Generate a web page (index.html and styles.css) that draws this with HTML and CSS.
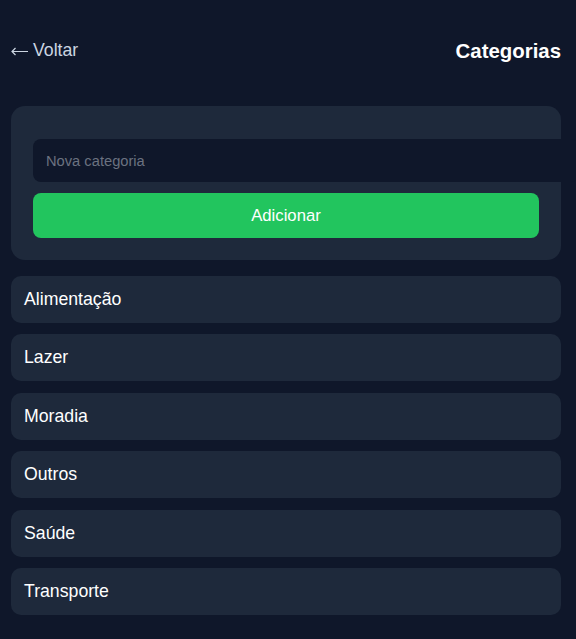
FILE: index.html
```html
<!DOCTYPE html>
<html lang="pt">
<head>
<meta charset="utf-8">
<link rel="stylesheet" href="styles.css">
</head>
<body>
<div class="page">
  <header class="header">
    <a class="back" href="#"><svg class="arrow" width="17" height="9" viewBox="0 0 17 9" fill="none" stroke="#cbd5e1" stroke-width="1.2"><path d="M1 4.5H17M4.5 1L1 4.5L4.5 8"/></svg>Voltar</a>
    <h1 class="title">Categorias</h1>
  </header>
  <section class="form-card">
    <input class="input" type="text" placeholder="Nova categoria">
    <button class="btn">Adicionar</button>
  </section>
  <ul class="list">
    <li class="item">Alimentação</li>
    <li class="item">Lazer</li>
    <li class="item">Moradia</li>
    <li class="item">Outros</li>
    <li class="item">Saúde</li>
    <li class="item">Transporte</li>
  </ul>
</div>
</body>
</html>
```
FILE: styles.css
```css
html, body {
  margin: 0;
  padding: 0;
  background: #0f172a;
  overflow-x: hidden;
}
body {
  font-family: "Liberation Sans", Arial, sans-serif;
  color: #ffffff;
}
.page {
  padding: 11px 15px 11px 11px;
}
.header {
  height: 80px;
  display: flex;
  align-items: center;
  justify-content: space-between;
  margin-bottom: 15px;
}
.back {
  display: flex;
  align-items: center;
  gap: 5px;
  color: #cbd5e1;
  text-decoration: none;
  font-size: 17.7px;
  margin-top: -1px;
}
.arrow {
  display: block;
  margin-top: 2px;
}
.title {
  margin: 0;
  font-size: 20.4px;
  font-weight: 700;
  color: #ffffff;
}
.form-card {
  background: #1e293b;
  border-radius: 14px;
  padding: 33px 22px 22px 22px;
  display: flex;
  flex-direction: column;
  gap: 11px;
}
.input {
  box-sizing: border-box;
  width: calc(100% + 40px);
  height: 43px;
  background: #0f172a;
  border: none;
  border-radius: 8px;
  padding: 0 13px;
  font-family: "Liberation Sans", Arial, sans-serif;
  font-size: 14.7px;
  color: #ffffff;
  outline: none;
}
.input::placeholder {
  color: #6b7280;
}
.btn {
  height: 45px;
  background: #22c55e;
  border: none;
  border-radius: 8px;
  color: #ffffff;
  font-family: "Liberation Sans", Arial, sans-serif;
  font-size: 16.7px;
}
.list {
  list-style: none;
  margin: 16px 0 0 0;
  padding: 0;
  display: flex;
  flex-direction: column;
  gap: 11.4px;
}
.item {
  height: 47px;
  box-sizing: border-box;
  display: flex;
  align-items: center;
  padding: 0 13px;
  background: #1e293b;
  border-radius: 10px;
  font-size: 17.7px;
  color: #ffffff;
}
```
